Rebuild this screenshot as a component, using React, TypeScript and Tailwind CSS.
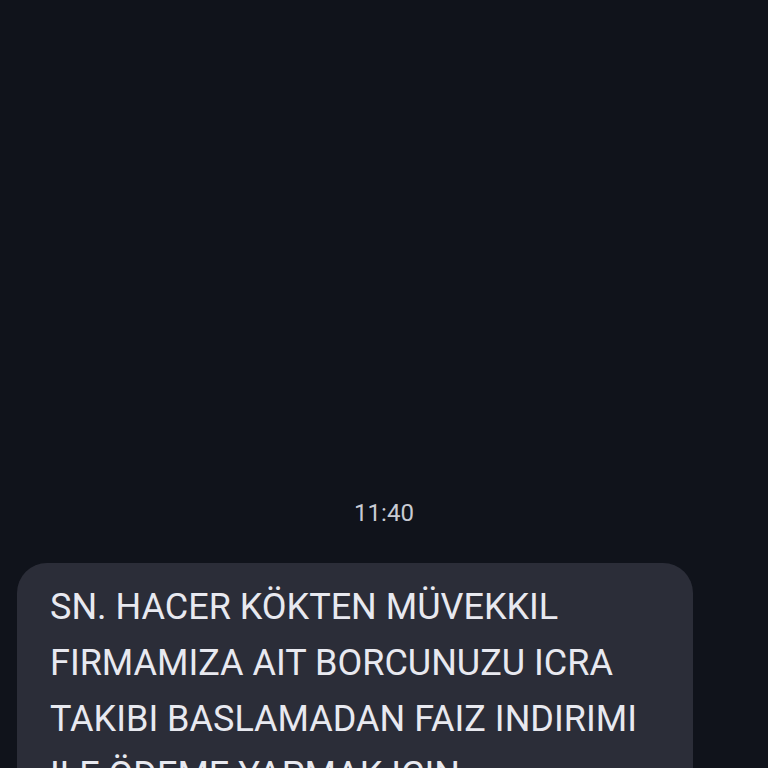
export default function App() {
  const lines = [
    'SN. HACER KÖKTEN MÜVEKKIL',
    'FIRMAMIZA AIT BORCUNUZU ICRA',
    'TAKIBI BASLAMADAN FAIZ INDIRIMI',
    'ILE ÖDEME YAPMAK ICIN',
    'LÜTFEN BIZIMLE ILETISIME GECINIZ',
  ]

  return (
    <main
      className="h-[768px] w-full overflow-hidden bg-[#10131b] pt-[497px]"
      style={{ fontFamily: 'Roboto, "Noto Sans", sans-serif' }}
    >
      <p className="text-center text-[24px] leading-[32px] text-[#c9cbd3]">11:40</p>

      <div className="mt-[34px] ml-[17px] w-[676px] rounded-[30px] bg-[#2b2d38] pl-[33px] pr-[24px] pt-[16px] pb-[20px]">
        {lines.map((line) => (
          <p key={line} className="text-[36px] leading-[56px] text-[#e8e9f0] whitespace-nowrap">
            {line}
          </p>
        ))}
      </div>
    </main>
  )
}
